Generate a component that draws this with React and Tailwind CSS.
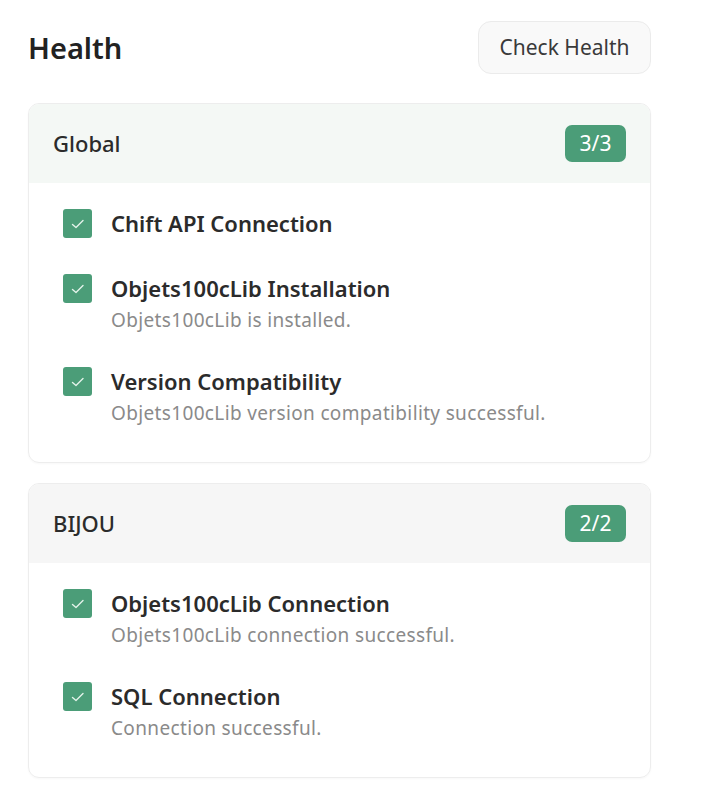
import React from "react";

function Check() {
  return (
    <div className="w-[29px] h-[29px] rounded-[3px] bg-[#4b9d78] flex items-center justify-center shrink-0">
      <svg width="18" height="18" viewBox="0 0 18 18" fill="none">
        <path d="M3.5 9.5 L7 12.5 L14 5.5" stroke="#e3f3ea" strokeWidth="1.4" strokeLinecap="round" strokeLinejoin="round" />
      </svg>
    </div>
  );
}

function Item({ title, desc }) {
  return (
    <div className="flex gap-[19px] items-start">
      <div className="pt-[1px]"><Check /></div>
      <div className="flex flex-col">
        <div className="text-[22px] leading-[31px] font-semibold text-[#2b2b2b]">{title}</div>
        {desc && <div className="text-[19px] leading-[24px] tracking-[0.35px] text-[#8a8a8a] mt-[4px]">{desc}</div>}
      </div>
    </div>
  );
}

function Card({ name, badge, items, headerBg }) {
  return (
    <div className="border border-[#ededed] rounded-[11px] overflow-hidden shadow-[0_1px_2px_rgba(0,0,0,0.03)]">
      <div className={`h-[79px] flex items-center justify-between pl-[24px] pr-[24px] ${headerBg}`}>
        <div className="text-[22px] text-[#2b2b2b] font-medium">{name}</div>
        <div className="h-[37px] w-[61px] rounded-[7px] bg-[#4b9d78] text-white text-[21px] flex items-center justify-center">{badge}</div>
      </div>
      <div className="flex flex-col gap-[34px] pl-[34px] pr-6 pt-[25px] pb-[37px]">
        {items.map((it) => (
          <Item key={it.title} {...it} />
        ))}
      </div>
    </div>
  );
}

export default function App() {
  return (
    <div className="w-[702px] h-[796px] bg-white" style={{ fontFamily: '"Noto Sans", "Open Sans", sans-serif' }}>
      <div className="pl-[28px] pr-[51px] pt-[21px]">
        <div className="flex items-center justify-between">
          <h1 className="text-[29px] font-semibold text-[#222]">Health</h1>
          <button className="h-[53px] w-[173px] rounded-[13px] border border-[#ebebeb] bg-[#f9f9f9] text-[21px] text-[#3a3a3a]">Check Health</button>
        </div>
        <div className="mt-[29px] flex flex-col gap-[20px]">
          <Card
            name="Global"
            badge="3/3"
            headerBg="bg-[#f4f8f5]"
            items={[
              { title: "Chift API Connection" },
              { title: "Objets100cLib Installation", desc: "Objets100cLib is installed." },
              { title: "Version Compatibility", desc: "Objets100cLib version compatibility successful." },
            ]}
          />
          <Card
            name="BIJOU"
            badge="2/2"
            headerBg="bg-[#f6f6f6]"
            items={[
              { title: "Objets100cLib Connection", desc: "Objets100cLib connection successful." },
              { title: "SQL Connection", desc: "Connection successful." },
            ]}
          />
        </div>
      </div>
    </div>
  );
}
